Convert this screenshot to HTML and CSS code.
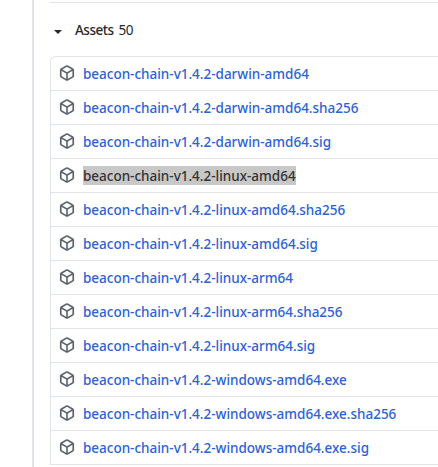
FILE: index.html
```
<!DOCTYPE html>
<html lang="en">
<head>
<meta charset="utf-8">
<title>Assets</title>
<link rel="stylesheet" href="styles.css">
</head>
<body>
<svg class="defs" aria-hidden="true"><symbol id="package" viewBox="0 0 16 16"><path fill-rule="evenodd" d="M8.878.392a1.75 1.75 0 0 0-1.756 0l-5.25 3.045A1.75 1.75 0 0 0 1 4.951v6.098c0 .624.332 1.2.872 1.514l5.25 3.045a1.75 1.75 0 0 0 1.756 0l5.25-3.045c.54-.313.872-.89.872-1.514V4.951c0-.624-.332-1.2-.872-1.514L8.878.392zM7.875 1.69a.25.25 0 0 1 .25 0l4.63 2.685L8 7.133 3.245 4.375l4.63-2.685zM2.5 5.677v5.372c0 .09.047.171.125.216l4.625 2.683V8.432L2.5 5.677zm6.25 8.271 4.625-2.683a.25.25 0 0 0 .125-.216V5.677L8.75 8.432v5.516z"/></symbol></svg>
<main class="release">
<section class="assets">
<h2 class="summary"><span class="caret"></span><span class="label">Assets</span><span class="count">50</span></h2>
<ul class="files">
<li><svg class="icon"><use href="#package"/></svg><a>beacon-chain-v1.4.2-darwin-amd64</a></li>
<li><svg class="icon"><use href="#package"/></svg><a>beacon-chain-v1.4.2-darwin-amd64.sha256</a></li>
<li><svg class="icon"><use href="#package"/></svg><a>beacon-chain-v1.4.2-darwin-amd64.sig</a></li>
<li><svg class="icon"><use href="#package"/></svg><a class="selected">beacon-chain-v1.4.2-linux-amd64</a></li>
<li><svg class="icon"><use href="#package"/></svg><a>beacon-chain-v1.4.2-linux-amd64.sha256</a></li>
<li><svg class="icon"><use href="#package"/></svg><a>beacon-chain-v1.4.2-linux-amd64.sig</a></li>
<li><svg class="icon"><use href="#package"/></svg><a>beacon-chain-v1.4.2-linux-arm64</a></li>
<li><svg class="icon"><use href="#package"/></svg><a>beacon-chain-v1.4.2-linux-arm64.sha256</a></li>
<li><svg class="icon"><use href="#package"/></svg><a>beacon-chain-v1.4.2-linux-arm64.sig</a></li>
<li><svg class="icon"><use href="#package"/></svg><a>beacon-chain-v1.4.2-windows-amd64.exe</a></li>
<li><svg class="icon"><use href="#package"/></svg><a>beacon-chain-v1.4.2-windows-amd64.exe.sha256</a></li>
<li><svg class="icon"><use href="#package"/></svg><a>beacon-chain-v1.4.2-windows-amd64.exe.sig</a></li>
</ul>
</section>
</main>
</body>
</html>
```
FILE: styles.css
```
* { box-sizing: border-box; }
body {
  margin: 0;
  height: 467px;
  overflow: hidden;
  background: #fff;
  color: #24292e;
  font: 13.5px/19px "Noto Sans", "Open Sans", sans-serif;
}
.defs { display: none; }
.release {
  height: 467px;
  margin-left: 32px;
  padding: 2px 0 0 16px;
  border-left: 2px solid #e1e4e8;
}
.assets { border-top: 1px solid #e1e4e8; }
.summary {
  display: flex;
  align-items: center;
  height: 53px;
  margin: 0;
  padding: 1px 0 0 4px;
  font-size: 13.5px;
  font-weight: 400;
}
.caret {
  margin: 3px 13px 0 0;
  border: 4px solid transparent;
  border-top-color: #24292e;
  border-bottom: 0;
}
.label { margin-right: 5px; font-weight: 550; letter-spacing: -0.5px; }
.count { letter-spacing: -0.4px; }
.files {
  margin: 0;
  padding: 0;
  list-style: none;
  border: solid #e1e4e8;
  border-width: 1px 0 0 1px;
  border-top-left-radius: 6px;
}
.files li {
  display: flex;
  align-items: center;
  height: 34px;
  padding-left: 8px;
  border-bottom: 1px solid #e1e4e8;
}
.icon {
  flex: none;
  width: 16px;
  height: 16px;
  margin: 0 8px 1px 0;
  fill: #586069;
  stroke: #586069;
  stroke-width: 0.15;
}
.files a {
  height: 19px;
  color: #2c62d4;
  font-weight: 550;
  line-height: 21px;
  letter-spacing: -0.01px;
  white-space: nowrap;
}
.files .selected { background: #c8c8c8; color: #333; }
```
